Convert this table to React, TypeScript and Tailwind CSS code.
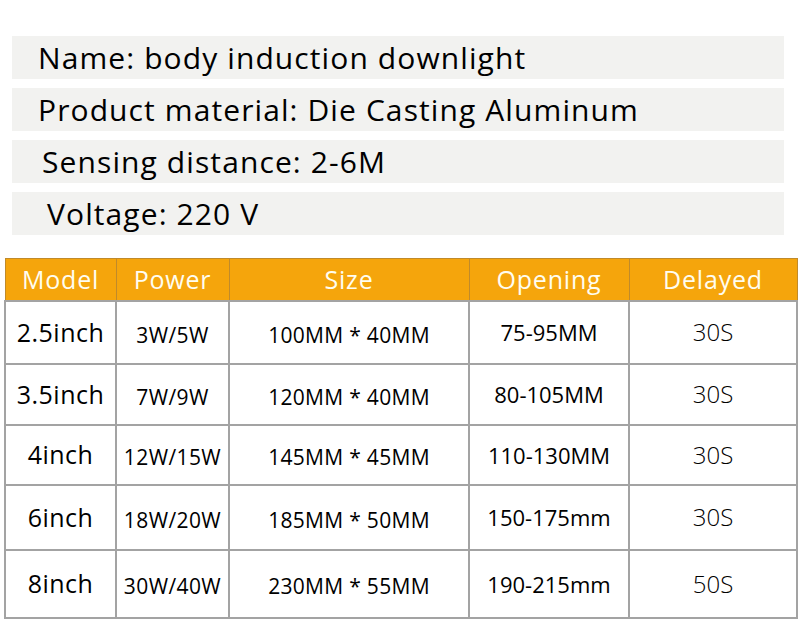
const specs = [
  { text: "Name: body induction downlight", pl: "pl-[26px]" },
  { text: "Product material: Die Casting Aluminum", pl: "pl-[26px]" },
  { text: "Sensing distance: 2-6M", pl: "pl-[30px]" },
  { text: "Voltage: 220 V", pl: "pl-[35px]" },
];

const rows = [
  { h: "h-[63px]", model: "2.5inch", power: "3W/5W", size: "100MM * 40MM", opening: "75-95MM", delay: "30S" },
  { h: "h-[61px]", model: "3.5inch", power: "7W/9W", size: "120MM * 40MM", opening: "80-105MM", delay: "30S" },
  { h: "h-[60px]", model: "4inch", power: "12W/15W", size: "145MM * 45MM", opening: "110-130MM", delay: "30S" },
  { h: "h-[65px]", model: "6inch", power: "18W/20W", size: "185MM * 50MM", opening: "150-175mm", delay: "30S" },
  { h: "h-[68px]", model: "8inch", power: "30W/40W", size: "230MM * 55MM", opening: "190-215mm", delay: "50S" },
];

export default function App() {
  return (
    <div className="w-[800px] h-[631px] bg-white overflow-hidden text-black" style={{ fontFamily: '"Open Sans", "Noto Sans", sans-serif' }}>
      {/* spec bars */}
      <div className="pt-[36px] pl-[12px] flex flex-col gap-[9px]">
        {specs.map((s) => (
          <div key={s.text} className={`w-[772px] h-[43px] bg-[#f2f2f0] flex items-center ${s.pl}`}>
            <span className="text-[30px] leading-none tracking-[1.1px]">{s.text}</span>
          </div>
        ))}
      </div>

      {/* table */}
      <table className="mt-[23px] ml-[4px] border-collapse table-fixed">
        <colgroup>
          <col className="w-[111px]" />
          <col className="w-[113px]" />
          <col className="w-[240px]" />
          <col className="w-[160px]" />
          <col className="w-[168px]" />
        </colgroup>
        <thead>
          <tr className="h-[42px] bg-[#f5a50c] text-[#fffdf0] text-[25px] tracking-[0.8px]">
            <th className="font-normal border border-[#c08a2a] leading-none">Model</th>
            <th className="font-normal border border-[#c08a2a] leading-none">Power</th>
            <th className="font-normal border border-[#c08a2a] leading-none">Size</th>
            <th className="font-normal border border-[#c08a2a] leading-none">Opening</th>
            <th className="font-normal border border-[#c08a2a] leading-none">Delayed</th>
          </tr>
        </thead>
        <tbody>
          {rows.map((r) => (
            <tr key={r.model} className={r.h}>
              <td className="border-2 border-[#a3a3a3] text-center text-[25px] tracking-[0.5px] leading-none">{r.model}</td>
              <td className="border-2 border-[#a3a3a3] text-center text-[21px] tracking-[0.4px] leading-none pt-[6px]">{r.power}</td>
              <td className="border-2 border-[#a3a3a3] text-center text-[21px] tracking-[0.3px] leading-none pt-[6px]">{r.size}</td>
              <td className="border-2 border-[#a3a3a3] text-center text-[22px] leading-none">{r.opening}</td>
              <td className="border-2 border-[#a3a3a3] text-center text-[24px] leading-none font-light">{r.delay}</td>
            </tr>
          ))}
        </tbody>
      </table>
    </div>
  );
}
